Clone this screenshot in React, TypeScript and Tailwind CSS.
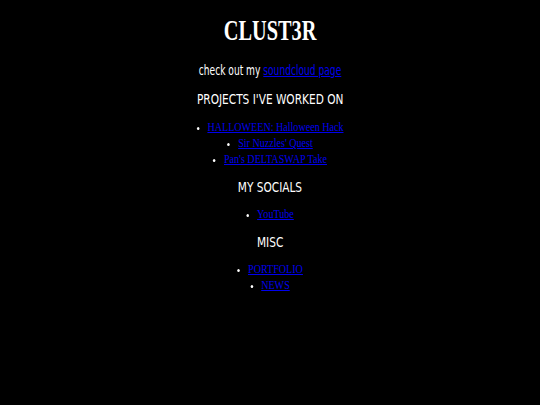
const heading = "inline-block scale-x-[0.87] text-[13.5px] leading-[18px] font-['DejaVu_Sans_Condensed','DejaVu_Sans',sans-serif]"
const link = 'text-[#0000ee] underline'

function LinkList({ items, className = '' }: { items: string[]; className?: string }) {
  return (
    <ul className={`list-disc list-inside text-[12px] leading-[16px] marker:text-[9px] ${className}`}>
      {items.map((item) => (
        <li key={item} className="h-4 scale-x-[0.84]">
          <a href="#" className={link}>{item}</a>
        </li>
      ))}
    </ul>
  )
}

export default function App() {
  return (
    <main className="min-h-screen w-full bg-black text-white text-center font-['Liberation_Serif',serif]">
      <div className="pt-[14px] flex justify-center">
        <h1 className="scale-x-[0.7] text-[29px] leading-[32px] font-bold">CLUST3R</h1>
      </div>
      <div className="mt-[15px] flex justify-center">
        <p className="scale-x-[0.75] text-[13.5px] leading-[18px] font-['DejaVu_Sans_Condensed','DejaVu_Sans',sans-serif]">
          check out my <a href="#" className={link}>soundcloud page</a>
        </p>
      </div>
      <div className="mt-[11px] flex justify-center">
        <h2 className={heading}>PROJECTS I'VE WORKED ON</h2>
      </div>
      <LinkList className="mt-[11px]" items={['HALLOWEEN: Halloween Hack', "Sir Nuzzles' Quest", "Pan's DELTASWAP Take"]} />
      <div className="mt-[11px] flex justify-center">
        <h2 className={heading}>MY SOCIALS</h2>
      </div>
      <LinkList className="mt-[10px]" items={['YouTube']} />
      <div className="mt-[11px] flex justify-center">
        <h2 className={heading}>MISC</h2>
      </div>
      <LinkList className="mt-[10px]" items={['PORTFOLIO', 'NEWS']} />
    </main>
  )
}
